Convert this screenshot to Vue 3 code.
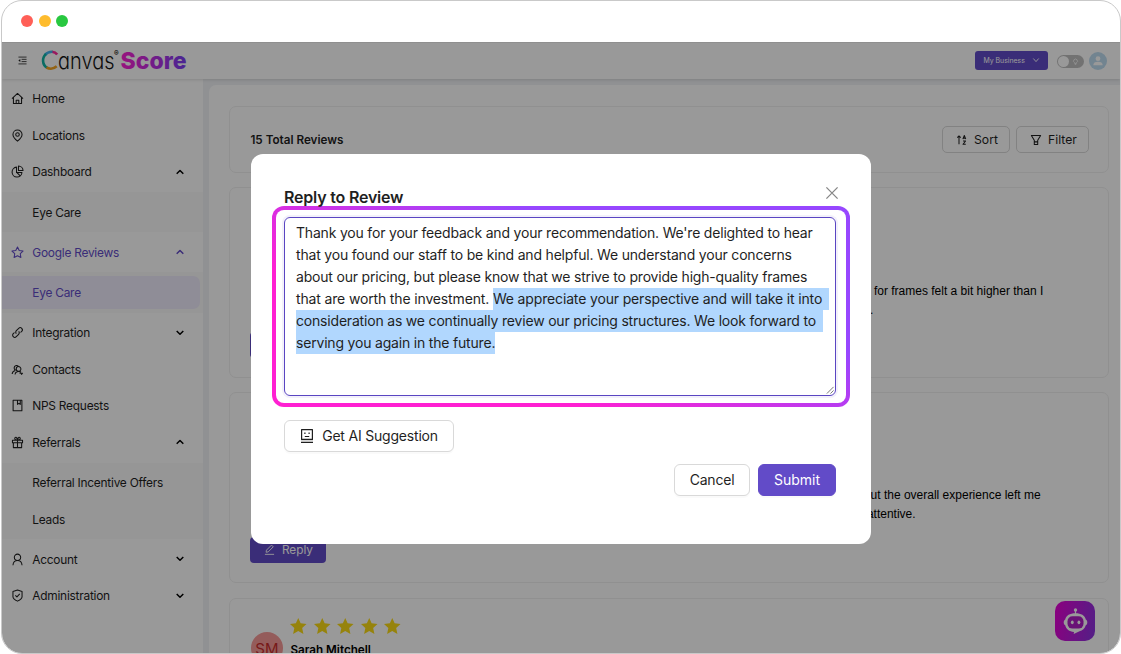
<script setup>
import { ref } from 'vue'

const icons = {
  home: 'M1.2 8.2 8 1.8l6.8 6.4M3 6.8v7.4h10V6.8M6.4 14v-3.8h3.2V14',
  pin: 'M8 15C4.6 12.2 2.4 9.6 2.4 6.8a5.6 5.6 0 0 1 11.2 0C13.6 9.6 11.4 12.2 8 15zM10.2 6.8a2.2 2.2 0 1 1-4.4 0 2.2 2.2 0 0 1 4.4 0z',
  pie: 'M6.8 2.6a6.1 6.1 0 1 0 6.7 6.7H6.8zM9.2 1.2v5.6h5.6a5.8 5.8 0 0 0-5.6-5.6zM7 9l4 4.2',
  star: 'M8 1.2l2.1 4.3 4.7.7-3.4 3.3.8 4.7L8 12l-4.2 2.2.8-4.7-3.4-3.3 4.7-.7z',
  link: 'M6.6 9.4a2.6 2.6 0 0 1 0-3.7l2.9-2.9a2.6 2.6 0 0 1 3.7 3.7l-1.5 1.5M9.4 6.6a2.6 2.6 0 0 1 0 3.7l-2.9 2.9a2.6 2.6 0 0 1-3.7-3.7l1.5-1.5',
  contacts: 'M1.4 13.5c.3-2.5 1.8-4 4-4.3M5.6 9A3.2 3.2 0 1 1 9 3.6M9.3 10.2a2.9 2.9 0 1 0 0-5.8 2.9 2.9 0 0 0 0 5.8zM5 14.2c.3-2.3 2-3.9 4.3-3.9 1.2 0 2.2.4 3 1.1M10.5 12.5h4M12.5 14.4l2-1.9',
  book: 'M2.6 1.6h10.8v12.8H2.6zM8 1.8v4.8l1.7-1.3 1.7 1.3V1.8',
  gift: 'M1.8 5.2h12.4v3H1.8zM2.9 8.2v6.1h10.2V8.2M8 5.2v9M8 5C6.5 5 4.6 4.7 4.6 3.1 4.6 1 7.6.8 8 5zM8 5c1.5 0 3.4-.3 3.4-1.9C11.4 1 8.400.8 8 5z',
  user: 'M8 9.2a3.9 3.9 0 1 0 0-7.8 3.9 3.9 0 0 0 0 7.8zM2.4 15c.3-3.4 2.5-5.7 5.6-5.7s5.3 2.3 5.6 5.7',
  shield: 'M8 1.2 13.6 3v6.4c0 2.2-2 3.7-5.6 5.5-3.6-1.8-5.6-3.3-5.6-5.5V3zM5.3 7.8l2 2 3.5-3.8'
}

const menu = [
  { label: 'Home', icon: 'home' },
  { label: 'Locations', icon: 'pin' },
  { label: 'Dashboard', icon: 'pie', open: true, children: ['Eye Care'] },
  { label: 'Google Reviews', icon: 'star', open: true, active: true, children: ['Eye Care'] },
  { label: 'Integration', icon: 'link', open: false },
  { label: 'Contacts', icon: 'contacts' },
  { label: 'NPS Requests', icon: 'book' },
  { label: 'Referrals', icon: 'gift', open: true, children: ['Referral Incentive Offers', 'Leads'] },
  { label: 'Account', icon: 'user', open: false },
  { label: 'Administration', icon: 'shield', open: false }
]

const reviews = [
  ['for frames felt a bit higher than I', '.'],
  ['but the overall experience left me', 'attentive.']
]

const replyLines = ref([
  { text: "Thank you for your feedback and your recommendation. We're delighted to hear" },
  { text: 'that you found our staff to be kind and helpful. We understand your concerns' },
  { text: 'about our pricing, but please know that we strive to provide high-quality frames' },
  { text: 'that are worth the investment. ', marked: 'We appreciate your perspective and will take it into ' },
  { text: '', marked: 'consideration as we continually review our pricing structures. We look forward to ' },
  { text: '', marked: 'serving you again in the future.' }
])
</script>

<template>
  <div class="window">
    <div class="titlebar">
      <i class="dot red"></i><i class="dot yellow"></i><i class="dot green"></i>
    </div>

    <div class="app">
      <header class="header">
        <svg class="fold" viewBox="0 0 10 10"><path d="M.5 1.2h9M4 3.7h5.5M4 6.2h5.5M.5 8.8h9" /><path class="solid" d="M2.6 3.3v3.4L.4 5z" /></svg>
        <svg class="logo" width="150" height="30" viewBox="0 0 150 30">
          <defs>
            <linearGradient id="score" x1="0" x2="1"><stop offset="0" stop-color="#ff20d2" /><stop offset="1" stop-color="#7b3ff5" /></linearGradient>
          </defs>
          <g fill="none" stroke-width="2.6">
            <path stroke="#ff2a9d" d="M11 5.8q3.5.3 5.2 2.6" />
            <path stroke="#43b4ee" d="M4 8.8Q6.8 5.5 11.5 5.7" />
            <path stroke="#12b5a5" d="M5 7.9C.8 11.5 1 19 6.2 21.9" />
            <path stroke="#f5a623" d="M5.4 21.5Q11 24.5 15.7 20.3" />
          </g>
          <text class="canvas" x="17" y="23.2" textLength="56.5" lengthAdjust="spacingAndGlyphs">anvas</text>
          <text class="reg" x="73" y="9.8">®</text>
          <text class="score" x="79.5" y="23.3" textLength="66" lengthAdjust="spacingAndGlyphs" fill="url(#score)">Score</text>
        </svg>
        <button class="business">
          My Business
          <svg viewBox="0 0 8 8"><path d="M1.3 2.5 4 5.6l2.7-3.1" /></svg>
        </button>
        <span class="toggle"><i></i><svg viewBox="0 0 8 8"><path d="M3 6.2V5.4A2.2 2.2 0 1 1 5 5.4v.8zM3.2 7.3h1.6" /></svg></span>
        <svg class="profile" viewBox="0 0 18 18"><circle cx="9" cy="9" r="9" fill="#bfdcf0" /><circle cx="9" cy="6.7" r="2.4" fill="#fff" /><path d="M4.3 13.2c0-2.3 1.7-3.4 4.7-3.4s4.7 1.1 4.7 3.4z" fill="#fff" /></svg>
      </header>

      <div class="body">
        <nav class="sidebar">
          <template v-for="item in menu" :key="item.label">
            <a class="item" :class="{ active: item.active }">
              <svg class="icon" viewBox="0 0 16 16"><path :d="icons[item.icon]" /></svg>
              <span>{{ item.label }}</span>
              <svg v-if="item.open !== undefined" class="caret" viewBox="0 0 8 8">
                <path :d="item.open ? 'M.7 5.7 4 2.5l3.3 3.2' : 'M.7 2 4 5.2 7.3 2'" />
              </svg>
            </a>
            <div v-if="item.children" class="sub">
              <a v-for="child in item.children" :key="child" class="item child" :class="{ selected: item.active }">{{ child }}</a>
            </div>
          </template>
        </nav>

        <main class="content">
          <section class="card summary">
            <h2>15 Total Reviews</h2>
            <button class="tool sort">
              <svg viewBox="0 0 14 14"><path d="M3.5 12V2.5M1.5 4.3l2-2 2 2M8 6l1.7-4.2L11.4 6M8.5 4.8H11M8.2 8.2h3L8.2 12h3.2" /></svg>
              Sort
            </button>
            <button class="tool filter">
              <svg viewBox="0 0 14 14"><path d="M1.6 1.8h10.8L9 7.4v4.8H5V7.4zM5 9.2h4" /></svg>
              Filter
            </button>
          </section>

          <section v-for="(lines, i) in reviews" :key="i" class="card review">
            <div class="quote" :class="'quote-' + i">
              <p v-for="line in lines" :key="line">{{ line }}</p>
            </div>
            <button class="reply">
              <svg viewBox="0 0 12 12"><path d="M1 11.3h10M2.3 9l.4-2.3L8.2 1.2l1.9 1.9-5.5 5.5z" /></svg>
              Reply
            </button>
          </section>

          <section class="card author">
            <span class="avatar">SM</span>
            <div>
              <div class="stars">
                <svg v-for="n in 5" :key="n" viewBox="0 0 16 16"><path d="M8 0l2.3 5.2 5.7.6-4.2 3.9L13 15.500l-5-3-5 3 1.2-5.8L0 5.8l5.7-.6z" /></svg>
              </div>
              <strong>Sarah Mitchell</strong>
            </div>
          </section>
        </main>
      </div>

      <span class="bot">
        <svg viewBox="0 0 40 40">
          <circle cx="20.5" cy="9" r="1.7" fill="#fff" />
          <path d="M20.5 9v4" stroke="#fff" stroke-width="1.2" />
          <path d="M20.5 12.3c5.8 0 9.2 2.2 10.3 6.2 2 .8 2 5 0 5.8-1 3.3-3.3 5.3-6.3 6l-5.8 2.6.3-2c-4.800-.2-7.700-2.600-8.800-6.600-2-.8-2-5 0-5.800 1.100-4 4.500-6.200 10.300-6.200z" fill="#fff" />
          <rect x="12.5" y="15.2" width="16" height="12.4" rx="5" fill="#b01fc5" />
          <ellipse cx="17.3" cy="21.3" rx="1.4" ry="1.9" fill="#fff" />
          <ellipse cx="23.9" cy="21.3" rx="1.4" ry="1.9" fill="#fff" />
        </svg>
      </span>

      <div class="mask"></div>
    </div>

    <div class="modal">
      <div class="modal-head">
        <h1>Reply to Review</h1>
        <svg class="close" viewBox="0 0 12 12"><path d="M.4.4l11.2 11.2M11.6.4.4 11.6" /></svg>
      </div>
      <div class="ring">
        <div class="textarea">
          <div v-for="(line, i) in replyLines" :key="i" class="line" :class="{ wide: line.text && line.marked }">{{ line.text }}<mark v-if="line.marked">{{ line.marked }}</mark></div>
          <svg class="grip" viewBox="0 0 9 9"><path d="M1 8.5 8.5 1M5 8.5 8.5 5" /></svg>
        </div>
      </div>
      <button class="btn suggest">
        <svg viewBox="0 0 14 14"><path d="M1.6.6h10.8v9.8H1.6zM1 13.4h12M4.8 7.5h4.4" /><path class="faint" d="M1 12h12" /><path class="eyes" d="M4.3 4.2h1.2M8.5 4.2h1.2" /></svg>
        Get AI Suggestion
      </button>
      <div class="actions">
        <button class="btn cancel">Cancel</button>
        <button class="btn primary">Submit</button>
      </div>
    </div>
  </div>
</template>

<style>
body {
  background: #fff;
  overflow: hidden;
}
</style>

<style scoped>
* {
  box-sizing: border-box;
}

.window {
  position: relative;
  width: 1120px;
  height: 654px;
  margin-left: 1px;
  border: 1px solid #c9c9c9;
  border-radius: 21px;
  overflow: hidden;
  background: #fff;
  font-family: Inter, sans-serif;
  color: #1f1f1f;
}

button {
  font-family: inherit;
  letter-spacing: inherit;
  display: flex;
  align-items: center;
  justify-content: center;
  padding: 0;
  white-space: nowrap;
}

svg {
  flex: none;
  overflow: visible;
}

svg path {
  stroke-linejoin: round;
}

.titlebar {
  height: 41px;
  display: flex;
  align-items: center;
  gap: 5.5px;
  padding: 0 0 2px 19px;
}

.dot {
  width: 12px;
  height: 12px;
  border-radius: 50%;
}

.red { background: #ff5f57; }
.yellow { background: #febc2e; }
.green { background: #28c840; }

.app {
  position: relative;
  height: 611px;
  background: #f0f2f5;
  overflow: hidden;
}

.header {
  position: relative;
  height: 37px;
  display: flex;
  align-items: center;
  background: #fff;
  border-top: 1px solid #eee;
  box-shadow: 0 1px 3px rgba(0, 0, 0, .12);
}

.fold {
  width: 9px;
  height: 9px;
  margin: 0 0 1px 16px;
  fill: none;
  stroke: #222;
  stroke-width: .9;
}

.solid {
  fill: #222;
  stroke: none;
}

.logo {
  margin-left: 13.5px;
}

.canvas {
  font-size: 23.5px;
  font-weight: 300;
  font-feature-settings: "cv11";
  fill: #151515;
}

.reg {
  font-size: 7px;
  font-weight: 600;
}

.score {
  font-size: 23.5px;
  font-weight: 800;
}

.business {
  width: 73px;
  height: 19px;
  margin: 0 0 2px auto;
  padding: 0 8px 0 8.5px;
  justify-content: space-between;
  border: 0;
  border-radius: 3px;
  background: #624bc8;
  color: #fff;
  font-size: 6.9px;
}

.business svg {
  width: 8px;
  fill: none;
  stroke: #fff;
  stroke-width: .9;
}

.toggle {
  display: flex;
  align-items: center;
  justify-content: space-between;
  width: 27px;
  height: 13px;
  margin-left: 9px;
  padding: 1px 5px 1px 1px;
  border-radius: 7px;
  background: #bfbfbf;
}

.toggle i {
  width: 11px;
  height: 11px;
  border-radius: 50%;
  background: #fff;
}

.toggle svg {
  width: 7px;
  fill: none;
  stroke: #fff;
  stroke-width: .8;
}

.profile {
  width: 18px;
  height: 18px;
  margin: 0 13px 0 5px;
}

.body {
  display: flex;
  height: 574px;
}

.sidebar {
  width: 201px;
  flex: none;
  display: flex;
  flex-direction: column;
  gap: 3.6px;
  padding-top: 3.2px;
  background: #fff;
}

.item {
  height: 33px;
  flex: none;
  display: flex;
  align-items: center;
  padding: 0 19px 0 9px;
  font-size: 11.9px;
  letter-spacing: -.24px;
}

.icon {
  width: 13px;
  height: 13px;
  margin-right: 8.3px;
  fill: none;
  stroke: currentColor;
  stroke-width: 1.3;
}

.caret {
  width: 8px;
  height: 8px;
  margin-left: auto;
  fill: none;
  stroke: #000;
  stroke-width: 1.5;
}

.active,
.selected {
  color: #624bc8;
}

.active .caret {
  stroke: #624bc8;
}

.sub {
  display: flex;
  flex-direction: column;
  gap: 3.6px;
  padding: 3.6px 0;
  background: #fafafa;
}

.child {
  padding-left: 30.3px;
}

.selected {
  margin-right: 3.5px;
  border-radius: 0 7px 7px 0;
  background: #efebfc;
}

.content {
  flex: 1;
  display: flex;
  flex-direction: column;
  gap: 14px;
  margin: 6px 0 0 6px;
  padding: 21px 11px 0 20.4px;
  border-radius: 7px 0 0 0;
  background: #fff;
}

.card {
  flex: none;
  border: 1px solid #f0f0f0;
  border-radius: 7px;
}

.summary {
  height: 67px;
  display: flex;
  align-items: center;
  padding: 0 19.5px 0 20px;
}

h2 {
  margin: 0 auto 0 0;
  font-size: 11.7px;
  font-weight: 600;
}

.tool {
  height: 27px;
  justify-content: flex-start;
  border: 1px solid #d9d9d9;
  border-radius: 5px;
  background: #fff;
  font-size: 12.2px;
  color: #1f1f1f;
}

.tool svg {
  width: 12px;
  margin-right: 6.5px;
  fill: none;
  stroke: #1f1f1f;
  stroke-width: 1.2;
}

.sort {
  width: 68px;
  padding-left: 13px;
}

.filter {
  width: 73px;
  margin-left: 6px;
  padding-left: 13px;
}

.review {
  height: 191px;
  display: flex;
  flex-direction: column;
  justify-content: flex-end;
  padding: 0 20px 19px 19.5px;
  margin-bottom: .3px;
}

.quote {
  font: 12px/19px "Liberation Sans", Arial, sans-serif;
  color: #000;
  margin-bottom: 13px;
}

.quote p {
  margin: 0;
}

.quote-0 {
  padding-left: 624px;
  margin-bottom: 12px;
}

.quote-0 p + p {
  margin-left: -4px;
}

.quote-1 {
  padding-left: 614px;
}

.quote-1 p + p {
  margin-left: 3px;
}

.reply {
  flex: none;
  width: 76px;
  height: 26px;
  padding: 0 0 1px 14px;
  justify-content: flex-start;
  border: 0;
  border-radius: 4px;
  background: #624bc8;
  color: #fff;
  font-size: 11.8px;
}

.reply svg {
  width: 11px;
  margin-right: 7px;
  fill: none;
  stroke: #fff;
  stroke-width: 1;
}

.author {
  height: 120px;
  display: flex;
  align-items: flex-start;
  padding: 19px 20.5px;
}

.avatar {
  width: 32px;
  height: 32px;
  margin: 14px 7.5px 0 0;
  border-radius: 50%;
  background: #f79a98;
  color: #c72a2a;
  font-size: 15px;
  line-height: 33px;
  text-align: center;
}

.stars {
  display: flex;
  gap: 7px;
  margin-bottom: 9px;
}

.stars svg {
  width: 16.5px;
  height: 16.5px;
  fill: #fadb14;
}

.author strong {
  display: block;
  font-size: 11.7px;
  font-weight: 600;
  line-height: 15px;
  color: #000;
}

.bot {
  position: absolute;
  right: 25px;
  bottom: 12px;
  width: 40px;
  height: 40px;
  border-radius: 10px;
  background: linear-gradient(100deg, #e800d4, #8a35e0);
}

.mask {
  position: absolute;
  inset: 0;
  background: rgba(0, 0, 0, .4);
}

.modal {
  position: absolute;
  left: 249px;
  top: 153px;
  width: 620px;
  height: 390px;
  padding: 33px 35px 0 33px;
  border-radius: 12px;
  background: #fff;
  letter-spacing: -.2px;
}

.modal-head {
  display: flex;
  justify-content: space-between;
  height: 19px;
}

h1 {
  margin: 0;
  font-size: 16px;
  font-weight: 600;
  line-height: 21px;
}

.close {
  width: 12px;
  height: 12px;
  margin-right: -2px;
  fill: none;
  stroke: #888;
  stroke-width: 1.3;
}

.ring {
  width: 578px;
  height: 201px;
  margin: 0 0 13px -12px;
  padding: 7px 10px 7px 8px;
  border: 4px solid transparent;
  border-radius: 12px;
  background:
    linear-gradient(#fff, #fff) padding-box,
    linear-gradient(24deg, #ff20d2 30%, #9747ff 68%) border-box;
}

.textarea {
  position: relative;
  width: 552px;
  height: 179px;
  padding: 4px 11px;
  border: 1px solid #5a46c2;
  border-radius: 6px;
  box-shadow: 0 0 0 2px rgba(98, 75, 200, .08);
  font-size: 14px;
}

.line {
  height: 22px;
  line-height: 22px;
  letter-spacing: -.19px;
  white-space: pre;
}

.wide {
  letter-spacing: -.15px;
}

mark {
  display: inline-block;
  height: 22px;
  padding-right: 3px;
  vertical-align: top;
  background: #b1d7fe;
  color: inherit;
}

.line:nth-child(6) mark {
  padding-right: 0;
}

.grip {
  position: absolute;
  right: 1px;
  bottom: 1px;
  width: 8px;
  height: 8px;
  fill: none;
  stroke: #555;
  stroke-width: .9;
}

.btn {
  height: 32px;
  padding: 0 15px 1px;
  border: 1px solid #d9d9d9;
  border-radius: 6px;
  background: #fff;
  box-shadow: 0 2px 0 rgba(0, 0, 0, .02);
  color: #1f1f1f;
  font-size: 14px;
}

.suggest {
  width: 170px;
}

.suggest svg {
  width: 14px;
  height: 14px;
  margin-right: 8px;
  fill: none;
  stroke: #1f1f1f;
  stroke-width: 1.2;
}

.suggest .eyes {
  stroke-width: 1.5;
}

.suggest .faint {
  stroke: #bbb;
}

.actions {
  display: flex;
  justify-content: flex-end;
  gap: 8px;
  margin-top: 12px;
}

.cancel {
  width: 76px;
}

.primary {
  width: 78px;
  letter-spacing: 0;
  border-color: #624bc8;
  background: #624bc8;
  color: #fff;
}
</style>
